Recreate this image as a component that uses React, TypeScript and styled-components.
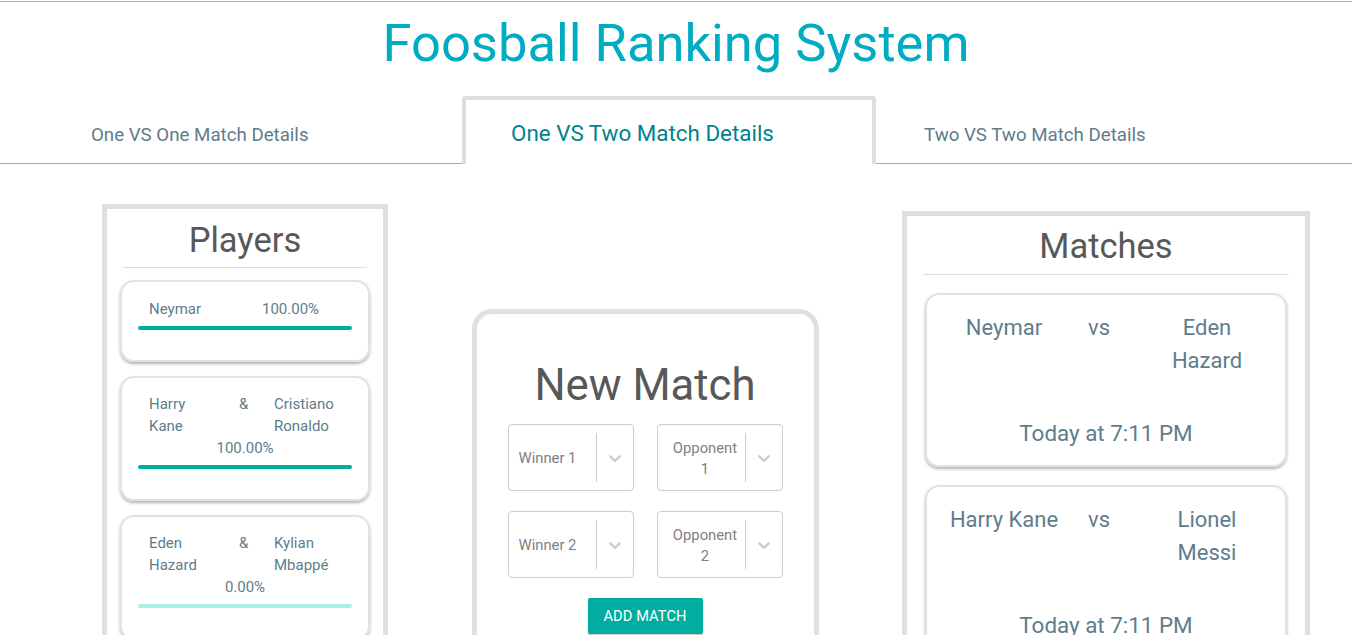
import React from "react";
import styled, { createGlobalStyle } from "styled-components";

const GlobalStyle = createGlobalStyle`
  html, body {
    margin: 0;
    padding: 0;
    overflow: hidden;
    background: #ffffff;
  }
  body {
    font-family: Roboto, "Liberation Sans", Arial, sans-serif;
  }
  * { box-sizing: border-box; }
`;

const Page = styled.div`
  margin-top: 1px;
  border-top: 1px solid #b3b3b3;
  min-height: 634px;
`;

const Title = styled.h1`
  margin: 15px 0 0;
  font-size: 52.5px;
  line-height: 52px;
  font-weight: 400;
  color: #00acc1;
  text-align: center;
`;

const TabBar = styled.div`
  display: flex;
  margin-top: 27px;
  padding-left: 48px;
  height: 68px;
  border-bottom: 1px solid #a9a9a9;
`;

const Tab = styled.div<{ $active?: boolean; $pad: number }>`
  width: 414px;
  height: ${(p) => (p.$active ? "68px" : "67px")};
  border: 4px solid ${(p) => (p.$active ? "#dedede" : "transparent")};
  border-bottom: none;
  border-radius: 4px 4px 0 0;
  background: #ffffff;
  padding-left: ${(p) => p.$pad}px;
  padding-top: ${(p) => (p.$active ? "22px" : "26px")};
  font-size: ${(p) => (p.$active ? "22.4px" : "18.7px")};
  line-height: 1;
  color: ${(p) => (p.$active ? "#00838f" : "#607d8b")};
  white-space: nowrap;
  position: relative;
  z-index: 1;
`;

const Content = styled.div`
  display: flex;
  align-items: flex-start;
  padding: 0 42px 0 102px;
  justify-content: space-between;
`;

const Panel = styled.section<{ $width: number; $top: number }>`
  width: ${(p) => p.$width}px;
  margin-top: ${(p) => p.$top}px;
  border: 5px solid #dfdfdf;
  background: #ffffff;
  padding-bottom: 20px;
`;

const PanelTitle = styled.h2<{ $pad: number }>`
  margin: 0;
  padding-top: ${(p) => p.$pad}px;
  font-size: 34.5px;
  line-height: 41px;
  font-weight: 400;
  color: #585858;
  text-align: center;
`;

const Divider = styled.hr<{ $top: number }>`
  border: none;
  height: 1px;
  background: #dddddd;
  margin: ${(p) => p.$top}px 16px 0;
`;

const CardList = styled.div<{ $top: number; $gap: number; $side: number }>`
  display: flex;
  flex-direction: column;
  gap: ${(p) => p.$gap}px;
  margin: ${(p) => p.$top}px ${(p) => p.$side}px 0;
`;

const PlayerCard = styled.div`
  border: 2px solid #e2e2e2;
  border-radius: 14px;
  box-shadow: 0 2px 3px rgba(0, 0, 0, 0.3);
  padding: 15px 16px 30px;
  font-size: 15px;
  line-height: 22px;
  color: #607d8b;
`;

const SingleRow = styled.div`
  display: grid;
  grid-template-columns: 113px 1fr;
  padding-left: 11px;
  padding-top: 1px;
`;

const PairRow = styled.div`
  display: grid;
  grid-template-columns: 90px 35px 1fr;
  padding-left: 11px;
`;

const PairName = styled.span<{ $first?: boolean }>`
  padding-right: ${(p) => (p.$first ? "28px" : "0")};
`;

const Percent = styled.div`
  text-align: center;
`;

const Bar = styled.div<{ $light?: boolean }>`
  margin-top: 6px;
  height: 4px;
  border-radius: 2px;
  background: ${(p) => (p.$light ? "#a7f1e7" : "#00ad9e")};
`;

const NewMatchCard = styled.section`
  width: 347px;
  margin-top: 145px;
  border: 5px solid #e0e0e0;
  border-radius: 20px;
  background: #ffffff;
  padding: 45px 0 40px;
  display: flex;
  flex-direction: column;
  align-items: center;
  text-align: center;
`;

const NewMatchTitle = styled.h2`
  margin: 0;
  font-size: 43.7px;
  line-height: 53px;
  font-weight: 400;
  color: #585858;
`;

const SelectGrid = styled.div`
  margin-top: 12px;
  display: grid;
  grid-template-columns: 126px 126px;
  column-gap: 23px;
  row-gap: 20px;
`;

const Control = styled.div`
  height: 67px;
  border: 1px solid #cccccc;
  border-radius: 4px;
  display: flex;
  align-items: center;
  background: #ffffff;
`;

const ValueArea = styled.div`
  flex: 1;
  min-width: 0;
  display: flex;
  align-items: center;
  padding: 2px 2px 0 10px;
`;

const Placeholder = styled.span`
  font-size: 14.8px;
  line-height: 21px;
  color: #808080;
  text-align: center;
`;

const Indicators = styled.div`
  align-self: stretch;
  display: flex;
  align-items: center;
`;

const Separator = styled.span`
  align-self: stretch;
  width: 1px;
  margin: 8px 0;
  background: #cccccc;
`;

const Arrow = styled.span`
  display: flex;
  padding: 8px;
  color: #cccccc;
`;

const AddButton = styled.button`
  margin-top: 20px;
  width: 115px;
  height: 36px;
  border: none;
  border-radius: 2px;
  background: #00ad9f;
  color: #ffffff;
  font-family: Roboto, "Liberation Sans", Arial, sans-serif;
  font-size: 14.6px;
  letter-spacing: 0.1px;
  box-shadow: 0 2px 2px rgba(0, 0, 0, 0.2);
  cursor: pointer;
`;

const MatchCard = styled.div`
  border: 2px solid #e2e2e2;
  border-radius: 14px;
  box-shadow: 0 2px 3px rgba(0, 0, 0, 0.3);
  padding: 16px 0 15px;
  font-size: 22px;
  line-height: 33px;
  color: #607d8b;
`;

const MatchRow = styled.div`
  display: grid;
  grid-template-columns: 120px 70px 146px;
  margin-left: 17px;
  text-align: center;
`;

const MatchName = styled.div<{ $narrow?: boolean }>`
  padding: 0 ${(p) => (p.$narrow ? "28px" : "0")};
`;

const MatchDate = styled.div`
  margin-top: 40px;
  font-size: 22.4px;
  text-align: center;
`;

const Chevron = () => (
  <svg width="20" height="20" viewBox="0 0 20 20" fill="currentColor" aria-hidden="true">
    <path d="M4.516 7.548c0.436-0.446 1.043-0.481 1.576 0l3.908 3.747 3.908-3.747c0.533-0.481 1.141-0.446 1.574 0 0.436 0.445 0.408 1.197 0 1.615-0.406 0.418-4.695 4.502-4.695 4.502-0.217 0.223-0.502 0.335-0.787 0.335s-0.57-0.112-0.789-0.335c0 0-4.287-4.084-4.695-4.502s-0.436-1.17 0-1.615z" />
  </svg>
);

const Select = ({ label }: { label: string }) => (
  <Control>
    <ValueArea>
      <Placeholder>{label}</Placeholder>
    </ValueArea>
    <Indicators>
      <Separator />
      <Arrow>
        <Chevron />
      </Arrow>
    </Indicators>
  </Control>
);

type Team = { players: string[]; pct: string; light?: boolean };

const teams: Team[] = [
  { players: ["Neymar"], pct: "100.00%" },
  { players: ["Harry Kane", "Cristiano Ronaldo"], pct: "100.00%" },
  { players: ["Eden Hazard", "Kylian Mbappé"], pct: "0.00%", light: true },
];

const matches = [
  { a: "Neymar", b: "Eden Hazard", when: "Today at 7:11 PM" },
  { a: "Harry Kane", b: "Lionel Messi", when: "Today at 7:11 PM" },
];

export default function App() {
  return (
    <Page>
      <GlobalStyle />
      <Title>Foosball Ranking System</Title>
      <TabBar>
        <Tab $pad={39}>One VS One Match Details</Tab>
        <Tab $active $pad={45}>One VS Two Match Details</Tab>
        <Tab $pad={44}>Two VS Two Match Details</Tab>
      </TabBar>
      <Content>
        <Panel $width={286} $top={40}>
          <PanelTitle $pad={11}>Players</PanelTitle>
          <Divider $top={6} />
          <CardList $top={12} $gap={14} $side={13}>
            {teams.map((t, i) => (
              <PlayerCard key={i}>
                {t.players.length === 1 ? (
                  <SingleRow>
                    <span>{t.players[0]}</span>
                    <span>{t.pct}</span>
                  </SingleRow>
                ) : (
                  <>
                    <PairRow>
                      <PairName $first>{t.players[0]}</PairName>
                      <span>&amp;</span>
                      <PairName>{t.players[1]}</PairName>
                    </PairRow>
                    <Percent>{t.pct}</Percent>
                  </>
                )}
                <Bar $light={t.light} />
              </PlayerCard>
            ))}
          </CardList>
        </Panel>

        <NewMatchCard>
          <NewMatchTitle>New Match</NewMatchTitle>
          <SelectGrid>
            <Select label="Winner 1" />
            <Select label="Opponent 1" />
            <Select label="Winner 2" />
            <Select label="Opponent 2" />
          </SelectGrid>
          <AddButton>ADD MATCH</AddButton>
        </NewMatchCard>

        <Panel $width={408} $top={47}>
          <PanelTitle $pad={10}>Matches</PanelTitle>
          <Divider $top={7} />
          <CardList $top={18} $gap={18} $side={18}>
            {matches.map((m, i) => (
              <MatchCard key={i}>
                <MatchRow>
                  <MatchName>{m.a}</MatchName>
                  <MatchName>vs</MatchName>
                  <MatchName $narrow>{m.b}</MatchName>
                </MatchRow>
                <MatchDate>{m.when}</MatchDate>
              </MatchCard>
            ))}
          </CardList>
        </Panel>
      </Content>
    </Page>
  );
}
